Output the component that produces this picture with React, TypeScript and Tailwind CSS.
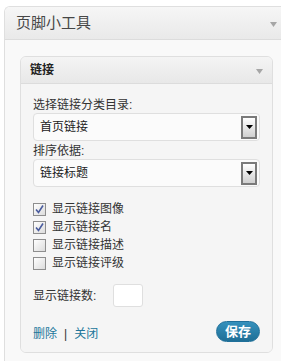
const FONT = "font-['Liberation_Sans','Noto_Sans_CJK_SC',sans-serif]";

function Arrow({ className }: { className: string }) {
  return (
    <svg width="7" height="5" viewBox="0 0 7 5" className={className}>
      <path d="M0 0 H7 L3.5 5 Z" fill="#a6a6a6" />
    </svg>
  );
}

function Select({ value }: { value: string }) {
  return (
    <div className="h-[28px] flex items-center justify-between border border-[#dfdfdf] rounded-[4px] bg-[#fbfbfb] pl-[6px] pr-[2px]">
      <span className="text-[12px] leading-[16px] text-[#222]">{value}</span>
      <div className="w-[16px] h-[23px] border-2 border-[#7a7a7a] bg-gradient-to-b from-white to-[#cfcfcf] flex items-center justify-center">
        <svg width="7" height="4" viewBox="0 0 7 4">
          <path d="M0 0 H7 L3.5 4 Z" fill="#000" />
        </svg>
      </div>
    </div>
  );
}

function Check({ checked, label }: { checked: boolean; label: string }) {
  return (
    <label className="h-[18px] flex items-center gap-[6px]">
      <span className="w-[13px] h-[13px] border border-[#8e8e8e] bg-gradient-to-br from-white to-[#dcdcdc] flex items-center justify-center">
        {checked && (
          <svg width="9" height="9" viewBox="0 0 9 9">
            <path d="M1 4.5 L3.5 7.5 L8 0.5" fill="none" stroke="#4a5c9e" strokeWidth="1.6" />
          </svg>
        )}
      </span>
      <span className="text-[12px] leading-[16px] text-[#333]">{label}</span>
    </label>
  );
}

export default function App() {
  return (
    <div className={`w-[281px] h-[361px] bg-white overflow-hidden pl-[4px] pt-[6px] ${FONT}`}>
      <div className="h-full flex flex-col border-l border-t border-[#dfdfdf] rounded-tl-[6px] overflow-hidden">
        <div className="h-[33px] shrink-0 flex items-center justify-between bg-gradient-to-b from-[#f6f6f6] to-[#e9e9e9] border-b border-[#dcdcdc] pl-[11px] pr-[4px]">
          <span className="text-[15px] leading-[20px] text-[#464646]">页脚小工具</span>
          <Arrow className="mt-[2px]" />
        </div>

        <div className="flex-1 bg-[#f9f9f9] pl-[15px] pt-[16px]">
          <div className="w-[253px] border border-[#dfdfdf] rounded-[6px] overflow-hidden">
            <div className="h-[27px] flex items-center justify-between bg-gradient-to-b from-[#f4f4f4] to-[#e8e8e8] border-b border-[#dcdcdc] pl-[9px] pr-[9px]">
              <span className="text-[12px] leading-[16px] font-bold text-[#222]">链接</span>
              <Arrow className="mt-[3px]" />
            </div>

            <div className="bg-[#f5f5f5] px-[12px] pt-[13px] pb-[10px] flex flex-col">
              <div className="h-[16px] text-[12px] leading-[16px] text-[#333]">选择链接分类目录:</div>
              <Select value="首页链接" />
              <div className="mt-[2px] h-[16px] text-[12px] leading-[16px] text-[#333]">排序依据:</div>
              <Select value="链接标题" />

              <div className="mt-[13px] flex flex-col">
                <Check checked label="显示链接图像" />
                <Check checked label="显示链接名" />
                <Check checked={false} label="显示链接描述" />
                <Check checked={false} label="显示链接评级" />
              </div>

              <div className="mt-[12px] flex items-center gap-[17px]">
                <span className="text-[12px] leading-[16px] text-[#333]">显示链接数:</span>
                <div className="w-[30px] h-[23px] bg-white border border-[#dfdfdf] rounded-[3px]" />
              </div>

              <div className="mt-[14px] flex items-center justify-between">
                <div className="flex items-center gap-[7px] text-[12px] leading-[16px] pt-[5px]">
                  <a className="text-[#21759b]">删除</a>
                  <span className="text-[#333]">|</span>
                  <a className="text-[#21759b]">关闭</a>
                </div>
                <button className="w-[44px] h-[21px] rounded-full bg-gradient-to-b from-[#3591bd] to-[#1f6f96] border border-[#20709a] text-white text-[13px] leading-[16px] font-bold">
                  保存
                </button>
              </div>
            </div>
          </div>
        </div>
      </div>
    </div>
  );
}
